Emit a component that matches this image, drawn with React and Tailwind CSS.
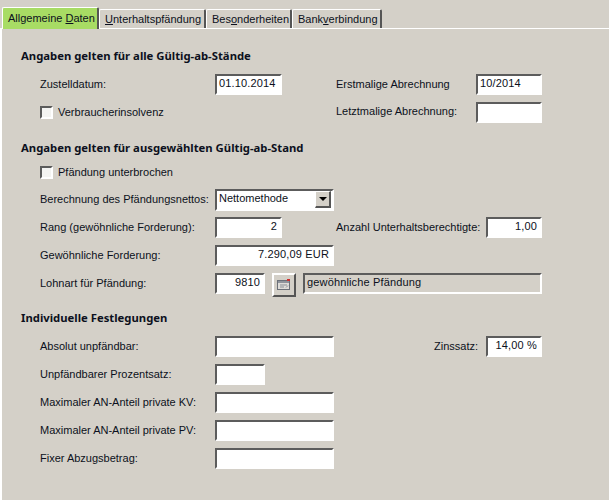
// Lohnpfändung dialog, first tab "Allgemeine Daten"

// sunken win classic style input box
function Field({ width, value, right = true, gray = false, children }) {
  return (
    <div
      className={`h-[21px] shrink-0 flex items-center border-2 border-t-[#5c5c5c] border-l-[#5c5c5c] border-r-white border-b-white ${
        gray ? "bg-[#d4d0c8]" : "bg-white"
      } ${right ? "justify-end pr-[3px]" : "justify-start pl-[2px]"} ${width}`}
    >
      <span className="leading-none -translate-y-[1px] whitespace-pre tracking-[0.15px]">{value}</span>
      {children}
    </div>
  );
}

function Tab({ active, width, before, key_, after }) {
  return (
    <div
      className={`pl-[5px] flex items-center shrink-0 border-t border-l border-white border-r-2 border-r-[#555] rounded-t-[2px] ${
        active ? "bg-[#a8dc64] h-[22px] -mb-[1px]" : "bg-[#d4d0c8] h-[19px]"
      } ${width}`}
    >
      <span className="whitespace-pre">
        {before}
        <u>{key_}</u>
        {after}
      </span>
    </div>
  );
}

function Check({ label }) {
  return (
    <div className="flex items-center h-[16px]">
      <div className="w-[13px] h-[13px] bg-[#f4f4f2] border-2 border-t-[#5c5c5c] border-l-[#5c5c5c] border-r-white border-b-white" />
      <span className="ml-[5px]">{label}</span>
    </div>
  );
}

function Row({ label, className = "", children }) {
  return (
    <div className={`flex items-center h-[21px] ${className}`}>
      <div className="w-[175px] shrink-0 whitespace-nowrap">{label}</div>
      {children}
    </div>
  );
}

function Heading({ className = "", children }) {
  return (
    <div className={`font-['Noto_Sans',sans-serif] font-bold text-[11.3px] leading-[16px] ${className}`}>
      {children}
    </div>
  );
}

export default function App() {
  return (
    <div className="font-['Liberation_Sans',sans-serif] w-[609px] h-[500px] overflow-hidden bg-[#d4d0c8] text-[11px] text-[#0c1020] pt-[7px]">
      <div className="flex items-end h-[21px] pl-[2px] relative z-10">
        <Tab active width="w-[97px]" before="Allgemeine " key_="D" after="aten" />
        <Tab width="w-[107px]" before="" key_="U" after="nterhaltspfändung" />
        <Tab width="w-[86px]" before="Bes" key_="o" after="nderheiten" />
        <Tab width="w-[90px]" before="Bank" key_="v" after="erbindung" />
      </div>
      <div className="h-[472px] border-t border-l-2 border-white pl-[19px] pt-[19px]">
        <Heading>Angaben gelten für alle Gültig-ab-Stände</Heading>
        <div className="pl-[19px]">
          <Row label="Zustelldatum:" className="mt-[10px]">
            <Field width="w-[67px]" value="01.10.2014" right={false} />
            <div className="w-[54px] shrink-0" />
            <div className="w-[140px] shrink-0">Erstmalige Abrechnung</div>
            <Field width="w-[66px]" value="10/2014" right={false} />
          </Row>
          <Row label={<Check label="Verbraucherinsolvenz" />} className="mt-[7px]">
            <div className="w-[121px] shrink-0" />
            <div className="w-[140px] shrink-0 -translate-y-[1px]">Letztmalige Abrechnung:</div>
            <Field width="w-[66px]" value="" />
          </Row>
        </div>

        <Heading className="mt-[17px]">Angaben gelten für ausgewählten Gültig-ab-Stand</Heading>
        <div className="pl-[19px]">
          <div className="mt-[8px]">
            <Check label="Pfändung unterbrochen" />
          </div>
          <Row label="Berechnung des Pfändungsnettos:" className="mt-[9px]">
            <div className="w-[119px] h-[22px] shrink-0 flex items-center justify-between bg-white border-2 border-t-[#5c5c5c] border-l-[#5c5c5c] border-r-white border-b-white pl-[2px] pr-[1px]">
              <span className="-translate-y-[1px]">Nettomethode</span>
              <div className="w-[16px] h-[17px] flex items-center justify-center bg-[#d4d0c8] border border-t-white border-l-white border-r-2 border-b-2 border-r-[#555] border-b-[#555]">
                <div className="w-0 h-0 border-x-[4px] border-x-transparent border-t-[4px] border-t-black" />
              </div>
            </div>
          </Row>
          <Row label="Rang (gewöhnliche Forderung):" className="mt-[7px]">
            <Field width="w-[67px]" value="2" />
            <div className="w-[54px] shrink-0" />
            <div className="w-[150px] shrink-0">Anzahl Unterhaltsberechtigte:</div>
            <Field width="w-[56px]" value="1,00" />
          </Row>
          <Row label="Gewöhnliche Forderung:" className="mt-[7px]">
            <Field width="w-[119px]" value="7.290,09 EUR" />
          </Row>
          <Row label="Lohnart für Pfändung:" className="mt-[7px]">
            <Field width="w-[50px]" value="9810" />
            <button className="ml-[7px] w-[24px] h-[24px] shrink-0 -mb-[2px] flex items-center justify-center bg-[#d4d0c8] border-2 border-t-white border-l-white border-r-[#555] border-b-[#555]">
              <svg width="14" height="12" viewBox="0 0 14 12">
                <rect x="0.5" y="1.5" width="12" height="9" fill="#dedcd8" stroke="#6b7078" />
                <rect x="1" y="2" width="11" height="2" fill="#8f949c" />
                <rect x="10" y="0" width="3" height="2" fill="#d03030" />
                <path d="M3 6h7M3 8h4" stroke="#8a8f96" />
                <path d="M9 8.5l2-2" stroke="#8a8f96" />
              </svg>
            </button>
            <div className="ml-[7px]">
              <Field width="w-[239px]" value="gewöhnliche Pfändung" right={false} gray />
            </div>
          </Row>
        </div>

        <Heading className="mt-[16px]">Individuelle Festlegungen</Heading>
        <div className="pl-[19px]">
          <Row label="Absolut unpfändbar:" className="mt-[10px]">
            <Field width="w-[119px]" value="" />
            <div className="w-[152px] shrink-0 text-right pr-[8px]">Zinssatz:</div>
            <Field width="w-[56px]" value="14,00 %" />
          </Row>
          <Row label="Unpfändbarer Prozentsatz:" className="mt-[7px]">
            <Field width="w-[50px]" value="" />
          </Row>
          <Row label="Maximaler AN-Anteil private KV:" className="mt-[7px]">
            <Field width="w-[119px]" value="" />
          </Row>
          <Row label="Maximaler AN-Anteil private PV:" className="mt-[7px]">
            <Field width="w-[119px]" value="" />
          </Row>
          <Row label="Fixer Abzugsbetrag:" className="mt-[7px]">
            <Field width="w-[119px]" value="" />
          </Row>
        </div>
      </div>
    </div>
  );
}
